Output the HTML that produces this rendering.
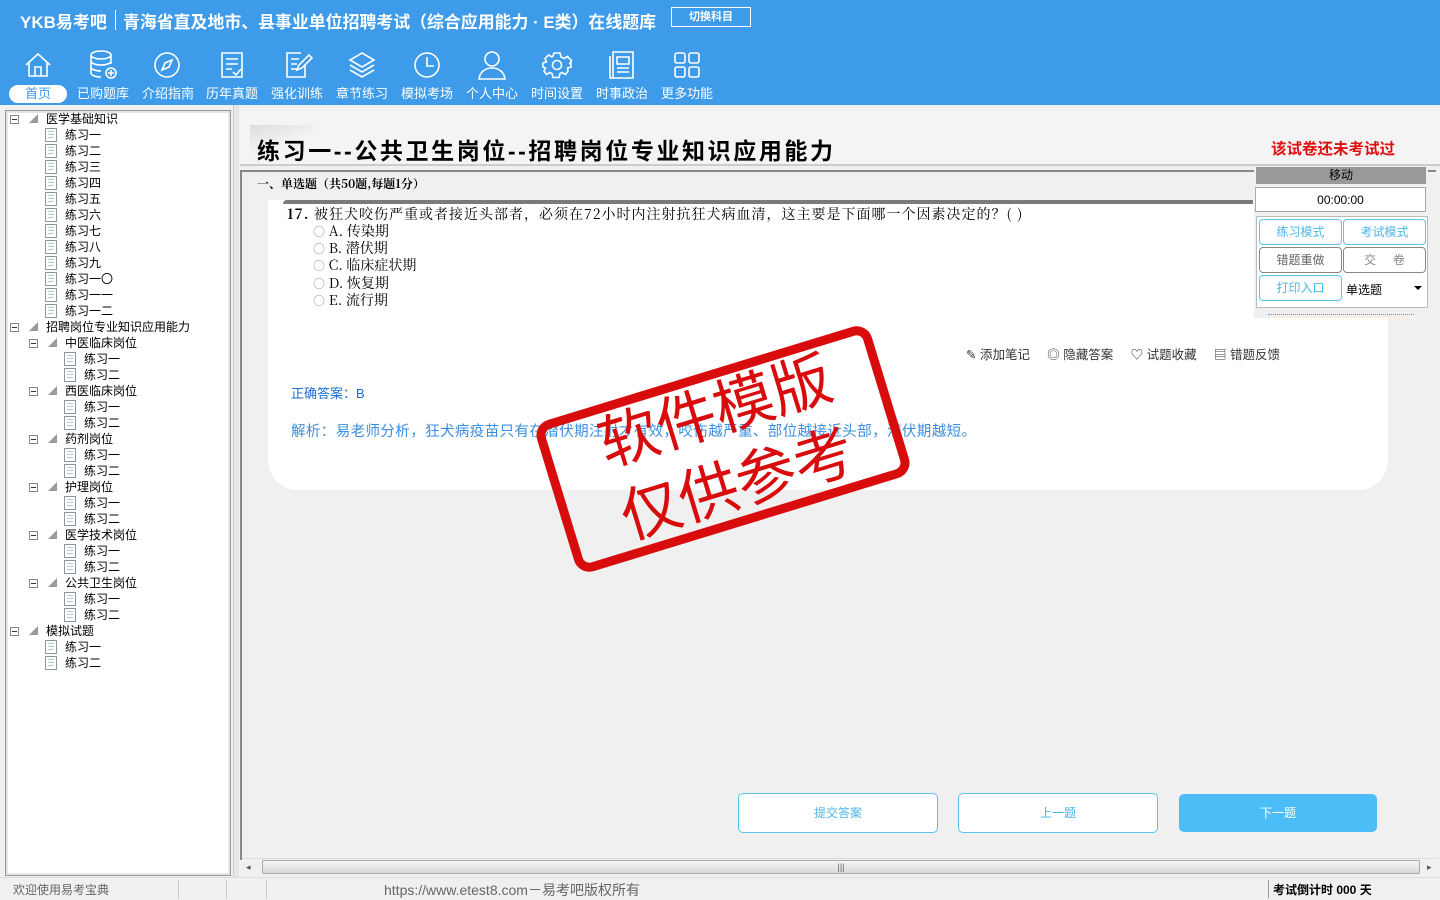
<!DOCTYPE html>
<html><head><meta charset="utf-8"><style>
*{margin:0;padding:0;box-sizing:border-box}
body{width:1440px;height:900px;overflow:hidden;background:#f0f0f0;font-family:"Liberation Sans","Noto Sans CJK SC",sans-serif;position:relative;font-size:12px;color:#000}
.a{position:absolute}
#hdr{left:0;top:0;width:1440px;height:105px;background:#3d9be9}
.ttl{color:#fff;font-weight:bold;font-size:16.8px;top:8px;white-space:nowrap}
.ic{top:48px;width:34px;height:34px;fill:none;stroke:#fff;stroke-width:1.6}
.lb{top:86px;color:#fff;font-size:13px;width:64px;text-align:center;line-height:16px}
#tree{left:5px;top:110px;width:226px;height:766px;background:#fff;border:1px solid #999;box-shadow:inset 0 0 0 2px #e5e5e5}
.r{position:absolute;height:16px;line-height:16px;font-size:12px;white-space:nowrap}
.bx{position:absolute;width:9px;height:9px;border:1px solid #888;background:#fff;top:4px}
.bx:after{content:"";position:absolute;left:1px;top:3px;width:5px;height:1px;background:#333}
.tri{position:absolute;top:3px;width:0;height:0;border-left:9px solid transparent;border-bottom:9px solid #999}
.doc{position:absolute;top:1px;width:12px;height:14px;border:1px solid #8a9aa0;background:repeating-linear-gradient(#fff 0 2px,#b8c8cc 2px 3px);background-clip:content-box;padding:2px}
.btn{position:absolute;border:1px solid #5bc4f0;border-radius:4px;background:#fff;color:#4ab6e8;text-align:center;font-size:12px}
.q{font-family:"Noto Serif CJK SC","Liberation Serif",serif}
</style></head><body>
<div id="hdr" class="a">
<div class="a ttl" style="left:20px;font-size:17px">YKB易考吧</div>
<div class="a" style="left:115px;top:10px;width:1px;height:20px;background:#fff"></div>
<div class="a ttl" style="left:123px;font-size:16.9px">青海省直及地市、县事业单位招聘考试（综合应用能力 · E类）在线题库</div>
<div class="a" style="left:671px;top:7px;width:80px;height:20px;border:1px solid #fff;color:#fff;font-size:11px;font-weight:bold;text-align:center;line-height:18px">切换科目</div>
<svg class="a ic" style="left:21px" viewBox="0 0 34 34"><path d="M5 17L17 6l12 11M8 14v14h18V14M14 28v-9h6v9"/></svg>
<svg class="a ic" style="left:86px" viewBox="0 0 34 34"><ellipse cx="15" cy="7" rx="10" ry="4"/><path d="M5 7v18c0 2 4 4 10 4M25 7v9M5 13c0 2 4 4 10 4s10-2 10-4M5 19c0 2 4 4 10 4"/><circle cx="25" cy="25" r="5"/><path d="M25 22v6M22 25h6"/></svg>
<svg class="a ic" style="left:150px" viewBox="0 0 34 34"><circle cx="17" cy="17" r="12"/><path d="M22 12l-3 7-7 3 3-7z"/></svg>
<svg class="a ic" style="left:215px" viewBox="0 0 34 34"><path d="M7 5h20v24H7zM11 11h12M11 16h12M11 21h6M18 24l3 3 5-6"/></svg>
<svg class="a ic" style="left:280px" viewBox="0 0 34 34"><path d="M25 17v12H7V5h14M11 11h8M11 16h6M11 21h6M17 22l2-5 10-10 3 3-10 10z"/></svg>
<svg class="a ic" style="left:345px" viewBox="0 0 34 34"><path d="M17 5l12 7-12 7-12-7zM5 17l12 7 12-7M5 22l12 7 12-7"/></svg>
<svg class="a ic" style="left:410px" viewBox="0 0 34 34"><circle cx="17" cy="17" r="12"/><path d="M17 9v9h7"/></svg>
<svg class="a ic" style="left:475px" viewBox="0 0 34 34"><circle cx="17" cy="11" r="7"/><path d="M4 31c1-7 6-11 13-11s12 4 13 11z"/></svg>
<svg class="a ic" style="left:540px" viewBox="0 0 34 34"><circle cx="17" cy="17" r="4.5"/><path d="M14 5h6l1 4 3 1.5 3.5-2 4 4-2 3.5L31 15v4l-3.5 1 .5 3-2.5 3.5-3.5-2-2 1-1 4h-6l-1-4-2-1-3.5 2L4 23l1.5-3L3 19v-4l3.5-1L5 10.5 8.5 7l3.5 2L13 8z"/></svg>
<svg class="a ic" style="left:605px" viewBox="0 0 34 34"><path d="M8 4h20v26H8zM5 8v22h3M12 9h12v7H12zM12 20h12M12 24h12"/></svg>
<svg class="a ic" style="left:670px" viewBox="0 0 34 34"><rect x="5" y="5" width="10" height="10" rx="2"/><rect x="19" y="5" width="10" height="10" rx="2"/><rect x="5" y="19" width="10" height="10" rx="2"/><rect x="19" y="19" width="10" height="10" rx="2"/></svg>
<div class="a" style="left:9px;top:85px;width:58px;height:18px;border-radius:9px;background:#fff"></div>
<div class="a lb" style="left:6px;color:#3d9be9">首页</div>
<div class="a lb" style="left:71px">已购题库</div><div class="a lb" style="left:136px">介绍指南</div><div class="a lb" style="left:200px">历年真题</div><div class="a lb" style="left:265px">强化训练</div><div class="a lb" style="left:330px">章节练习</div><div class="a lb" style="left:395px">模拟考场</div><div class="a lb" style="left:460px">个人中心</div><div class="a lb" style="left:525px">时间设置</div><div class="a lb" style="left:590px">时事政治</div><div class="a lb" style="left:655px">更多功能</div>
</div>

<div id="tree" class="a"></div>
<div class="a" style="left:0;top:0">
<div class="r" style="top:111px;left:0"><span class="bx" style="left:10px"></span><span class="tri" style="left:29px"></span><span style="position:absolute;left:46px">医学基础知识</span></div>
<div class="r" style="top:127px"><span class="doc" style="left:45px"></span><span style="position:absolute;left:65px">练习一</span></div>
<div class="r" style="top:143px"><span class="doc" style="left:45px"></span><span style="position:absolute;left:65px">练习二</span></div>
<div class="r" style="top:159px"><span class="doc" style="left:45px"></span><span style="position:absolute;left:65px">练习三</span></div>
<div class="r" style="top:175px"><span class="doc" style="left:45px"></span><span style="position:absolute;left:65px">练习四</span></div>
<div class="r" style="top:191px"><span class="doc" style="left:45px"></span><span style="position:absolute;left:65px">练习五</span></div>
<div class="r" style="top:207px"><span class="doc" style="left:45px"></span><span style="position:absolute;left:65px">练习六</span></div>
<div class="r" style="top:223px"><span class="doc" style="left:45px"></span><span style="position:absolute;left:65px">练习七</span></div>
<div class="r" style="top:239px"><span class="doc" style="left:45px"></span><span style="position:absolute;left:65px">练习八</span></div>
<div class="r" style="top:255px"><span class="doc" style="left:45px"></span><span style="position:absolute;left:65px">练习九</span></div>
<div class="r" style="top:271px"><span class="doc" style="left:45px"></span><span style="position:absolute;left:65px">练习一〇</span></div>
<div class="r" style="top:287px"><span class="doc" style="left:45px"></span><span style="position:absolute;left:65px">练习一一</span></div>
<div class="r" style="top:303px"><span class="doc" style="left:45px"></span><span style="position:absolute;left:65px">练习一二</span></div>
<div class="r" style="top:319px"><span class="bx" style="left:10px"></span><span class="tri" style="left:29px"></span><span style="position:absolute;left:46px">招聘岗位专业知识应用能力</span></div>
<div class="r" style="top:335px"><span class="bx" style="left:29px"></span><span class="tri" style="left:48px"></span><span style="position:absolute;left:65px">中医临床岗位</span></div>
<div class="r" style="top:351px"><span class="doc" style="left:64px"></span><span style="position:absolute;left:84px">练习一</span></div>
<div class="r" style="top:367px"><span class="doc" style="left:64px"></span><span style="position:absolute;left:84px">练习二</span></div>
<div class="r" style="top:383px"><span class="bx" style="left:29px"></span><span class="tri" style="left:48px"></span><span style="position:absolute;left:65px">西医临床岗位</span></div>
<div class="r" style="top:399px"><span class="doc" style="left:64px"></span><span style="position:absolute;left:84px">练习一</span></div>
<div class="r" style="top:415px"><span class="doc" style="left:64px"></span><span style="position:absolute;left:84px">练习二</span></div>
<div class="r" style="top:431px"><span class="bx" style="left:29px"></span><span class="tri" style="left:48px"></span><span style="position:absolute;left:65px">药剂岗位</span></div>
<div class="r" style="top:447px"><span class="doc" style="left:64px"></span><span style="position:absolute;left:84px">练习一</span></div>
<div class="r" style="top:463px"><span class="doc" style="left:64px"></span><span style="position:absolute;left:84px">练习二</span></div>
<div class="r" style="top:479px"><span class="bx" style="left:29px"></span><span class="tri" style="left:48px"></span><span style="position:absolute;left:65px">护理岗位</span></div>
<div class="r" style="top:495px"><span class="doc" style="left:64px"></span><span style="position:absolute;left:84px">练习一</span></div>
<div class="r" style="top:511px"><span class="doc" style="left:64px"></span><span style="position:absolute;left:84px">练习二</span></div>
<div class="r" style="top:527px"><span class="bx" style="left:29px"></span><span class="tri" style="left:48px"></span><span style="position:absolute;left:65px">医学技术岗位</span></div>
<div class="r" style="top:543px"><span class="doc" style="left:64px"></span><span style="position:absolute;left:84px">练习一</span></div>
<div class="r" style="top:559px"><span class="doc" style="left:64px"></span><span style="position:absolute;left:84px">练习二</span></div>
<div class="r" style="top:575px"><span class="bx" style="left:29px"></span><span class="tri" style="left:48px"></span><span style="position:absolute;left:65px">公共卫生岗位</span></div>
<div class="r" style="top:591px"><span class="doc" style="left:64px"></span><span style="position:absolute;left:84px">练习一</span></div>
<div class="r" style="top:607px"><span class="doc" style="left:64px"></span><span style="position:absolute;left:84px">练习二</span></div>
<div class="r" style="top:623px"><span class="bx" style="left:10px"></span><span class="tri" style="left:29px"></span><span style="position:absolute;left:46px">模拟试题</span></div>
<div class="r" style="top:639px"><span class="doc" style="left:45px"></span><span style="position:absolute;left:65px">练习一</span></div>
<div class="r" style="top:655px"><span class="doc" style="left:45px"></span><span style="position:absolute;left:65px">练习二</span></div>
</div>

<div class="a" style="left:233px;top:105px;width:6px;height:772px;background:#e6e6e6;border-left:1px solid #ccc"></div>
<div class="a" style="left:240px;top:108px;width:1200px;height:58px;background:#f4f4f4;border-bottom:2px solid #ccc"></div>
<div class="a" style="left:250px;top:125px;width:65px;height:30px;background:linear-gradient(160deg,#ddd,#f4f4f4 60%)"></div>
<div class="a" style="left:257px;top:132px;font-size:23px;letter-spacing:2.6px;font-weight:bold;white-space:nowrap">练习一--公共卫生岗位--招聘岗位专业知识应用能力</div>
<div class="a" style="left:1271px;top:137px;font-size:15.5px;font-weight:bold;color:#e01010">该试卷还未考试过</div>
<div class="a" style="left:240px;top:170px;width:1196px;height:690px;border:2px solid #888;border-right:none;border-bottom:none;background:#f0f0f0"></div>
<div class="a q" style="left:257px;top:175px;font-size:12px;font-weight:bold">一、单选题（共50题,每题1分）</div>
<div class="a" style="left:268px;top:200px;width:1120px;height:290px;background:#fff;border-radius:0 0 30px 30px"></div>
<div class="a" style="left:283px;top:200px;width:970px;height:4px;background:#7a7a7a;border-radius:4px 0 0 0"></div>
<div class="a q" style="left:287px;top:204px;font-size:14px;letter-spacing:1px;white-space:nowrap"><b>17.</b> 被狂犬咬伤严重或者接近头部者，必须在72小时内注射抗狂犬病血清，这主要是下面哪一个因素决定的？( )</div>
<div class="a q" style="left:313px;top:223px;font-size:14px;line-height:17.2px">
<div><span style="color:#999;font-size:12px">○</span> A. 传染期</div><div><span style="color:#999;font-size:12px">○</span> B. 潜伏期</div><div><span style="color:#999;font-size:12px">○</span> C. 临床症状期</div><div><span style="color:#999;font-size:12px">○</span> D. 恢复期</div><div><span style="color:#999;font-size:12px">○</span> E. 流行期</div></div>
<div class="a" style="left:966px;top:344px;font-size:12.5px;color:#333;white-space:nowrap">✎ 添加笔记 &nbsp;&nbsp;&nbsp; ◎ 隐藏答案 &nbsp;&nbsp;&nbsp; ♡ 试题收藏 &nbsp;&nbsp;&nbsp; ▤ 错题反馈</div>
<div class="a" style="left:291px;top:383px;font-size:13px;color:#1a6fd0">正确答案：B</div>
<div class="a" style="left:291px;top:420px;font-size:14.5px;letter-spacing:0.4px;color:#3a8ee0;white-space:nowrap">解析：易老师分析，狂犬病疫苗只有在潜伏期注射才有效，咬伤越严重、部位越接近头部，潜伏期越短。</div>

<div class="a" style="left:1254px;top:167px;width:174px;height:151px;background:#f0f0f0"></div>
<div class="a" style="left:1256px;top:167px;width:170px;height:17px;background:#999;text-align:center;font-size:12px;line-height:17px">移动</div>
<div class="a" style="left:1255px;top:187px;width:171px;height:25px;background:#fff;border:1px solid #aaa;text-align:center;line-height:24px;font-size:12px">00:00:00</div>
<div class="a" style="left:1256px;top:216px;width:172px;height:92px;background:#fff;border:1px solid #bbb"></div>
<div class="btn" style="left:1259px;top:219px;width:83px;height:26px;line-height:25px">练习模式</div>
<div class="btn" style="left:1343px;top:219px;width:83px;height:26px;line-height:25px">考试模式</div>
<div class="btn" style="left:1259px;top:247px;width:83px;height:26px;line-height:25px;border-color:#888;color:#666">错题重做</div>
<div class="btn" style="left:1343px;top:247px;width:83px;height:26px;line-height:25px;border-color:#888;color:#888">交 &nbsp;&nbsp;&nbsp; 卷</div>
<div class="btn" style="left:1259px;top:275px;width:83px;height:26px;line-height:25px">打印入口</div>
<div class="a" style="left:1346px;top:281px;font-size:12px">单选题</div>
<div class="a" style="left:1414px;top:286px;border-left:4px solid transparent;border-right:4px solid transparent;border-top:4px solid #000"></div>
<div class="a" style="left:1268px;top:314px;width:146px;border-top:1px dotted #4a9be0"></div>

<div class="btn" style="left:738px;top:793px;width:200px;height:40px;line-height:38px;border-radius:5px">提交答案</div>
<div class="btn" style="left:958px;top:793px;width:200px;height:40px;line-height:38px;border-radius:5px">上一题</div>
<div class="btn" style="left:1179px;top:794px;width:198px;height:38px;line-height:37px;border-radius:5px;background:#4dbdf7;color:#fff;border-color:#4dbdf7">下一题</div>

<div class="a" style="left:242px;top:858px;width:1196px;height:18px;background:#f0f0f0;border-top:1px solid #ddd"></div>
<div class="a" style="left:262px;top:860px;width:1158px;height:14px;border:1px solid #aaa;border-radius:2px;background:linear-gradient(#f6f6f6,#d8d8d8);text-align:center;font-size:9px;line-height:12px;color:#666">|||</div>
<div class="a" style="left:246px;top:862px;font-size:9px;color:#555">◂</div>
<div class="a" style="left:1427px;top:862px;font-size:9px;color:#555">▸</div>

<div class="a" style="left:0;top:877px;width:1440px;height:23px;background:#f0f0f0;border-top:1px solid #ddd"></div>
<div class="a" style="left:13px;top:881px;font-size:12px;color:#666">欢迎使用易考宝典</div>
<div class="a" style="left:178px;top:880px;width:1px;height:18px;background:#ccc"></div>
<div class="a" style="left:226px;top:880px;width:1px;height:18px;background:#ccc"></div>
<div class="a" style="left:266px;top:880px;width:1px;height:18px;background:#ccc"></div>
<div class="a" style="left:384px;top:880px;font-size:14px;color:#666">https://www.etest8.com－易考吧版权所有</div>
<div class="a" style="left:1268px;top:880px;width:1px;height:18px;background:#999"></div>
<div class="a" style="left:1273px;top:881px;font-size:12px;font-weight:bold">考试倒计时 000 天</div>

<div class="a" style="left:548px;top:370px;width:350px;height:158px;border:9px solid #d80c0c;border-radius:16px;transform:rotate(-17deg);transform-origin:center"></div>
<div class="a" style="left:575px;top:368px;width:300px;transform:rotate(-17deg);color:#d80c0c;font-size:60px;line-height:76px;text-align:center;font-family:'Noto Sans CJK SC',sans-serif">软件模版<br>仅供参考</div>
</body></html>
